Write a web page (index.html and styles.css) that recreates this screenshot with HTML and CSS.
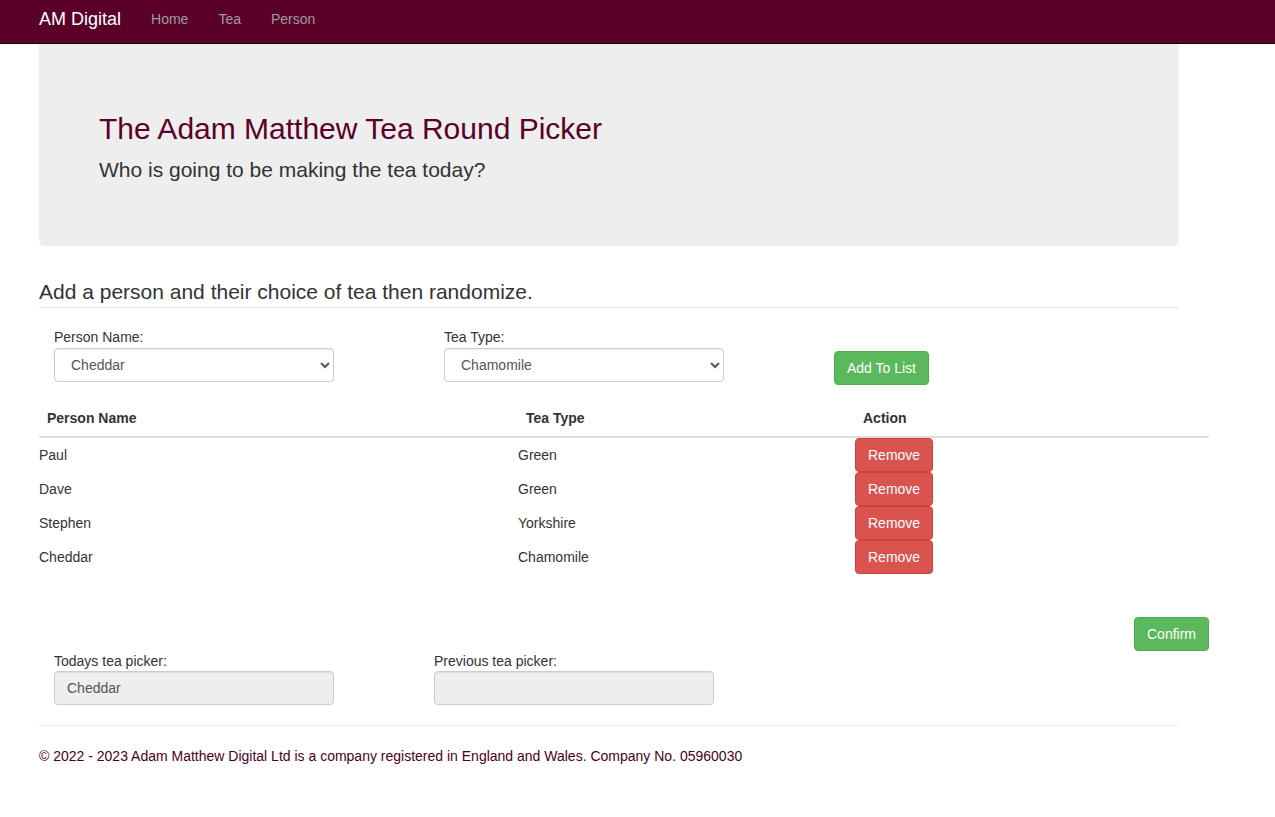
FILE: index.html
```html
<!DOCTYPE html>
<html lang="en">
<head>
<meta charset="utf-8">
<title>Tea Round Picker - AM Digital</title>
<link rel="stylesheet" href="styles.css">
</head>
<body>
<nav class="navbar">
  <a class="brand" href="#">AM Digital</a>
  <a class="nav-link" href="#">Home</a>
  <a class="nav-link" href="#">Tea</a>
  <a class="nav-link" href="#">Person</a>
</nav>
<main class="container">
  <section class="jumbotron">
    <h1 class="title">The Adam Matthew Tea Round Picker</h1>
    <p class="lead">Who is going to be making the tea today?</p>
  </section>

  <h4 class="section-heading">Add a person and their choice of tea then randomize.</h4>

  <div class="form-row">
    <div class="form-col">
      <label class="label">Person Name:</label>
      <select class="select">
        <option>Cheddar</option>
        <option>Paul</option>
        <option>Dave</option>
        <option>Stephen</option>
      </select>
    </div>
    <div class="form-col">
      <label class="label">Tea Type:</label>
      <select class="select">
        <option>Chamomile</option>
        <option>Green</option>
        <option>Yorkshire</option>
      </select>
    </div>
    <div class="form-col btn-col">
      <button class="btn btn-success">Add To List</button>
    </div>
  </div>

  <table class="table">
    <thead>
      <tr>
        <th class="c1">Person Name</th>
        <th class="c2">Tea Type</th>
        <th class="c3">Action</th>
      </tr>
    </thead>
    <tbody>
      <tr><td>Paul</td><td>Green</td><td><button class="btn btn-danger">Remove</button></td></tr>
      <tr><td>Dave</td><td>Green</td><td><button class="btn btn-danger">Remove</button></td></tr>
      <tr><td>Stephen</td><td>Yorkshire</td><td><button class="btn btn-danger">Remove</button></td></tr>
      <tr><td>Cheddar</td><td>Chamomile</td><td><button class="btn btn-danger">Remove</button></td></tr>
    </tbody>
  </table>

  <div class="confirm-row">
    <button class="btn btn-success">Confirm</button>
  </div>

  <div class="picker-row">
    <div class="picker-col">
      <label class="label picker-label">Todays tea picker:</label>
      <input class="input" type="text" value="Cheddar" readonly>
    </div>
    <div class="picker-col">
      <label class="label picker-label">Previous tea picker:</label>
      <input class="input" type="text" value="" readonly>
    </div>
  </div>

  <hr class="divider">
  <footer class="footer">© 2022 - 2023 Adam Matthew Digital Ltd is a company registered in England and Wales. Company No. 05960030</footer>
</main>
</body>
</html>
```

FILE: styles.css
```css
* { box-sizing: border-box; }

html, body {
  margin: 0;
  padding: 0;
  background: #fff;
  font-family: "Liberation Sans", Arial, Helvetica, sans-serif;
  font-size: 14px;
  line-height: 20px;
  color: #333;
}

.navbar {
  display: flex;
  align-items: flex-start;
  height: 44px;
  background: #5a0029;
  border-bottom: 1px solid #1c0009;
  padding-left: 24px;
}

.brand {
  font-size: 18px;
  line-height: 20px;
  color: #fff;
  text-decoration: none;
  padding: 9px 15px 0 15px;
}

.nav-link {
  font-size: 14px;
  line-height: 20px;
  color: #9d9d9d;
  text-decoration: none;
  padding: 9px 15px 0 15px;
}

.container {
  padding-left: 39px;
  width: 1209px;
}

.jumbotron {
  width: 1140px;
  background: #eee;
  border-radius: 0 0 6px 6px;
  padding: 68px 60px 62px 60px;
}

.title {
  margin: 0;
  font-size: 30px;
  line-height: 33px;
  font-weight: normal;
  color: #5a0029;
}

.lead {
  margin: 11px 0 0 0;
  font-size: 21px;
  line-height: 28px;
  color: #333;
}

.section-heading {
  width: 1140px;
  margin: 35px 0 0 0;
  font-size: 21px;
  line-height: 22px;
  font-weight: normal;
  color: #333;
  padding-bottom: 4px;
  border-bottom: 1px solid #e5e5e5;
}

.form-row {
  display: flex;
  margin-top: 19px;
  width: 1170px;
}

.form-col {
  width: 390px;
  padding: 0 15px;
  display: flex;
  flex-direction: column;
  align-items: flex-start;
}

.btn-col {
  padding-top: 24px;
}

.label {
  display: block;
  font-size: 14px;
  line-height: 20px;
  margin-bottom: 1px;
  color: #333;
}

.picker-label {
  margin-bottom: 0;
}

.select {
  width: 280px;
  height: 34px;
  padding: 6px 12px;
  font-family: "Liberation Sans", Arial, sans-serif;
  font-size: 14px;
  color: #555;
  background: #fff;
  border: 1px solid #ccc;
  border-radius: 4px;
  box-shadow: inset 0 1px 1px rgba(0,0,0,.075);
}

.btn {
  display: inline-block;
  height: 34px;
  padding: 6px 12px;
  font-family: "Liberation Sans", Arial, sans-serif;
  font-size: 14px;
  line-height: 20px;
  color: #fff;
  border: 1px solid transparent;
  border-radius: 4px;
  cursor: pointer;
}

.btn-success {
  background: #5cb85c;
  border-color: #4cae4c;
}

.btn-danger {
  background: #d9534f;
  border-color: #d43f3a;
}

.table {
  margin-top: 15px;
  width: 1170px;
  border-collapse: collapse;
  border-spacing: 0;
}

.table th {
  text-align: left;
  font-weight: bold;
  padding: 8px;
  line-height: 20px;
  border-bottom: 2px solid #ddd;
  vertical-align: bottom;
}

.c1 { width: 479px; }
.c2 { width: 337px; }
.c3 { width: 354px; }

.table td {
  padding: 0;
  height: 34px;
  vertical-align: middle;
}

.table td .btn {
  display: block;
}

.confirm-row {
  display: flex;
  justify-content: flex-end;
  width: 1170px;
  margin-top: 43px;
}

.picker-row {
  display: flex;
}

.picker-col {
  width: 380px;
  padding: 0 15px;
}

.input {
  display: block;
  width: 280px;
  height: 34px;
  padding: 6px 12px;
  font-family: "Liberation Sans", Arial, sans-serif;
  font-size: 14px;
  color: #555;
  background: #eee;
  border: 1px solid #ccc;
  border-radius: 4px;
  box-shadow: inset 0 1px 1px rgba(0,0,0,.075);
  outline: none;
}

.divider {
  width: 1140px;
  margin: 20px 0 0 0;
  border: 0;
  border-top: 1px solid #eee;
  height: 0;
}

.footer {
  margin-top: 20px;
  font-size: 14px;
  line-height: 20px;
  color: #4a0022;
}
```
